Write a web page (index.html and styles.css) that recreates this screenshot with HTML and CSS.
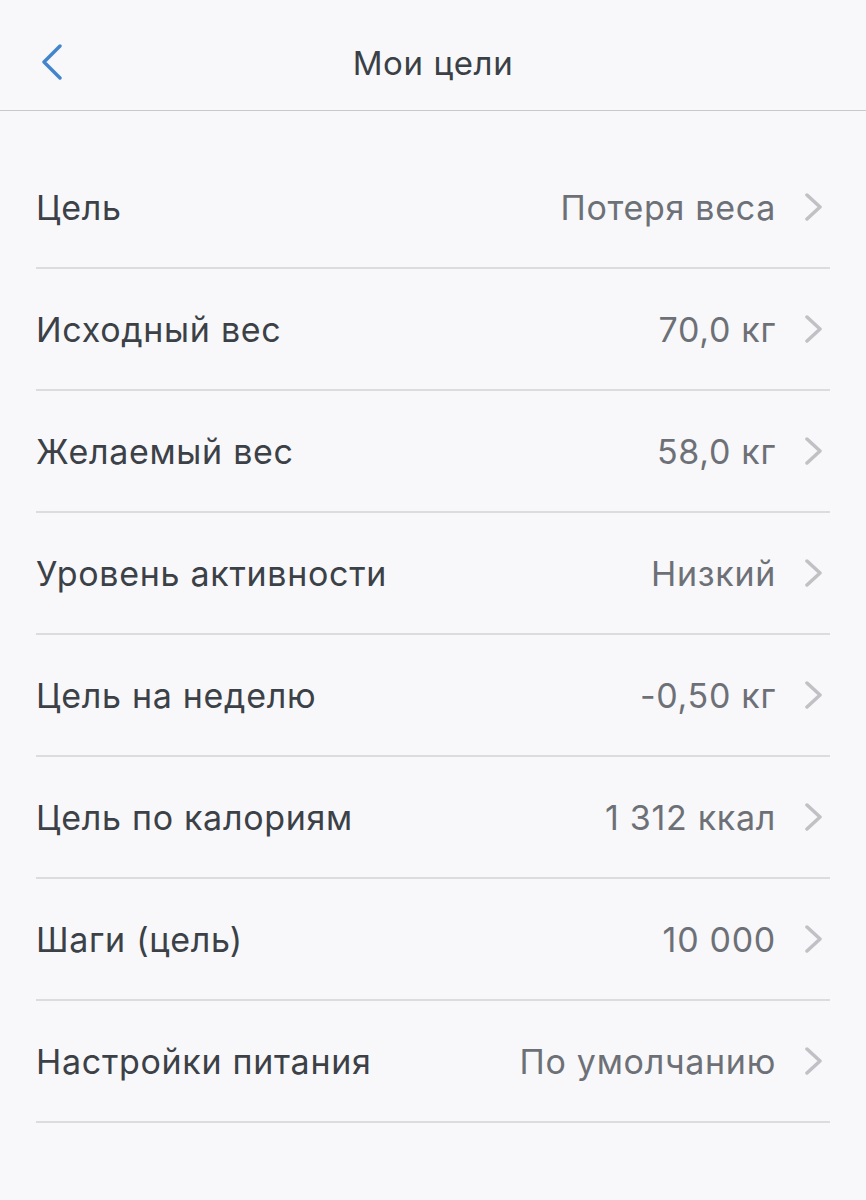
FILE: index.html
```html
<!DOCTYPE html>
<html lang="ru">
<head>
    <meta charset="UTF-8">
    <title>Мои цели</title>
    <link rel="stylesheet" href="styles.css">
</head>
<body>

<div class="header">
    <a class="back" href="#">
        <svg width="22" height="36" viewBox="0 0 22 36"><polyline points="19,2 3,18 19,34" fill="none" stroke="#4285cd" stroke-width="3.4" stroke-linecap="round" stroke-linejoin="round"/></svg>
    </a>
    <div class="title">Мои цели</div>
</div>

<div class="list">
    <div class="row"><span class="label">Цель</span><span class="value">Потеря веса</span><svg class="chev" viewBox="0 0 18 28"><polyline points="2,2 15,14 2,26"/></svg></div>
    <div class="row"><span class="label">Исходный вес</span><span class="value">70,0 кг</span><svg class="chev" viewBox="0 0 18 28"><polyline points="2,2 15,14 2,26"/></svg></div>
    <div class="row"><span class="label">Желаемый вес</span><span class="value">58,0 кг</span><svg class="chev" viewBox="0 0 18 28"><polyline points="2,2 15,14 2,26"/></svg></div>
    <div class="row"><span class="label">Уровень активности</span><span class="value">Низкий</span><svg class="chev" viewBox="0 0 18 28"><polyline points="2,2 15,14 2,26"/></svg></div>
    <div class="row"><span class="label">Цель на неделю</span><span class="value">-0,50 кг</span><svg class="chev" viewBox="0 0 18 28"><polyline points="2,2 15,14 2,26"/></svg></div>
    <div class="row"><span class="label">Цель по калориям</span><span class="value">1 312 ккал</span><svg class="chev" viewBox="0 0 18 28"><polyline points="2,2 15,14 2,26"/></svg></div>
    <div class="row"><span class="label">Шаги (цель)</span><span class="value">10 000</span><svg class="chev" viewBox="0 0 18 28"><polyline points="2,2 15,14 2,26"/></svg></div>
    <div class="row"><span class="label">Настройки питания</span><span class="value">По умолчанию</span><svg class="chev" viewBox="0 0 18 28"><polyline points="2,2 15,14 2,26"/></svg></div>
</div>

</body>
</html>
```

FILE: styles.css
```css
body {
    margin: 0;
    background-color: #f8f8fa;
    font-family: Inter, "Noto Sans", sans-serif;
    color: #3b4147;
}
.header {
    position: relative;
    height: 111px;
    border-bottom: 1px solid #c9c9cc;
    display: flex;
    align-items: center;
    justify-content: center;
    box-sizing: border-box;
    padding-top: 16px;
}
.back {
    position: absolute;
    left: 41px;
    top: 44px;
    display: block;
    line-height: 0;
}
.title {
    font-size: 33px;
    letter-spacing: 0.6px;
    color: #3a4046;
}
.list {
    margin-top: 36px;
    padding: 0 36px;
}
.row {
    display: flex;
    align-items: center;
    height: 122px;
    box-sizing: border-box;
    border-bottom: 2px solid #dcdcdf;
    font-size: 34px;
    letter-spacing: 0.7px;
}
.label {
    flex: 1;
}
.value {
    color: #6d7177;
}
.chev {
    width: 18px;
    height: 28px;
    margin-left: 29px;
    margin-right: 7px;
}
.chev polyline {
    fill: none;
    stroke: #c1c1c5;
    stroke-width: 3.5;
    stroke-linecap: round;
    stroke-linejoin: round;
}
```
